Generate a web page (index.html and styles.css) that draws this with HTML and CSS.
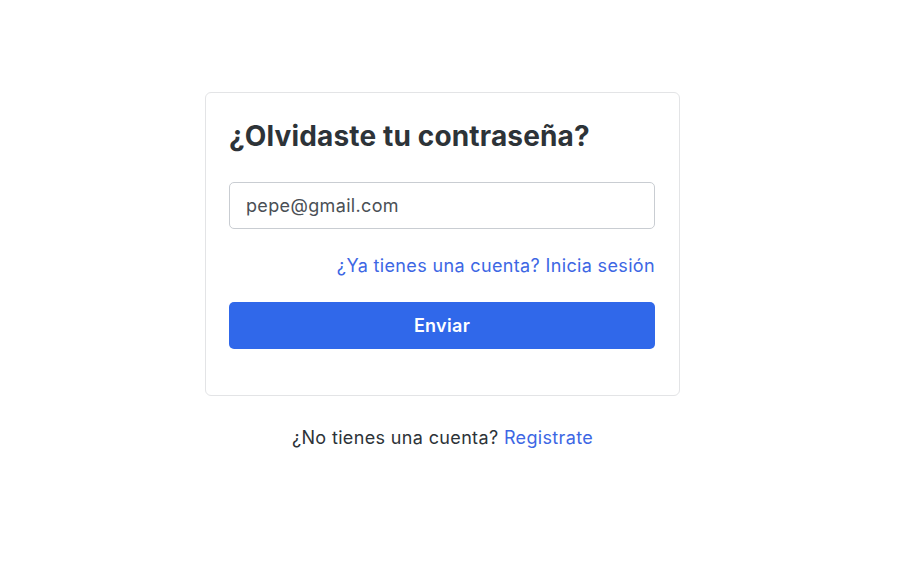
FILE: index.html
```html
<!DOCTYPE html>
<html lang="es">
<head>
<meta charset="utf-8">
<title>¿Olvidaste tu contraseña?</title>
<link rel="stylesheet" href="styles.css">
</head>
<body>
<main class="page">
  <div class="wrap">
    <form class="card">
      <h1 class="title">¿Olvidaste tu contraseña?</h1>
      <input class="input" type="email" value="pepe@gmail.com">
      <div class="link-row"><a class="link" href="#">¿Ya tienes una cuenta? Inicia sesión</a></div>
      <button class="btn" type="button">Enviar</button>
    </form>
    <p class="footer">¿No tienes una cuenta? <a class="link" href="#">Registrate</a></p>
  </div>
</main>
</body>
</html>
```
FILE: styles.css
```css
* { box-sizing: border-box; }
html, body { margin: 0; padding: 0; background: #fff; }
body { font-family: Inter, "Noto Sans", sans-serif; color: #2d3338; }
.page { display: flex; justify-content: center; padding: 92px 12px 0 0; }
.wrap { width: 475px; }
.card {
  border: 1px solid #e3e4e6;
  border-radius: 6px;
  padding: 23px 24px 46px 23px;
  display: flex;
  flex-direction: column;
}
.title { margin: 0 0 26px; font-size: 28px; font-weight: 700; line-height: 40px; letter-spacing: 0.15px; color: #2d3338; }
.input {
  height: 47px;
  border: 1px solid #c9cdd2;
  border-radius: 5px;
  padding: 0 16px;
  font-family: inherit;
  font-size: 18px;
  letter-spacing: 0.35px;
  color: #4a4f55;
  outline: none;
}
.link-row { display: flex; justify-content: flex-end; margin: 24px 0 23px; line-height: 26px; }
.link { color: #3d67e4; text-decoration: none; font-size: 18px; letter-spacing: 0.35px; }
.btn {
  height: 47px;
  border: 0;
  border-radius: 5px;
  background: #3068ea;
  color: #fff;
  font-family: inherit;
  font-size: 18px;
  font-weight: 600;
  letter-spacing: 0.3px;
}
.footer { margin: 30px 0 0; text-align: center; font-size: 18px; line-height: 24px; letter-spacing: 0.35px; color: #2d3338; }
```
